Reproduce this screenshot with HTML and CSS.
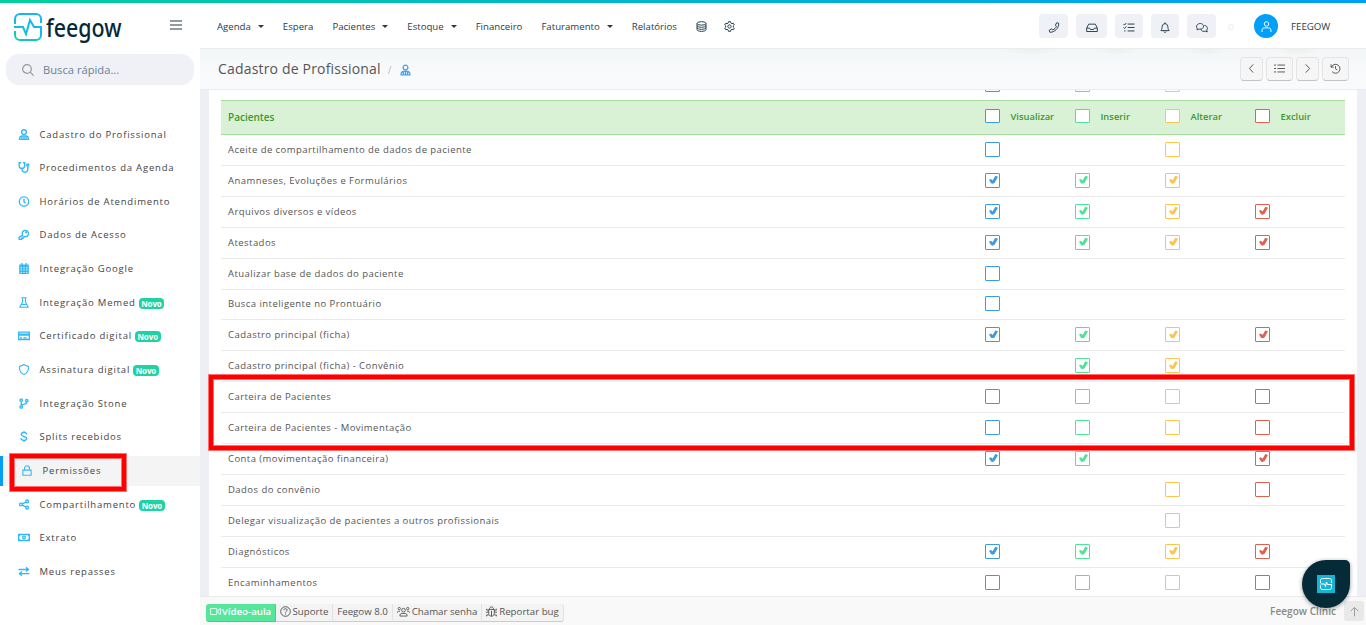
FILE: index.html
```html
<!DOCTYPE html>
<html lang="pt-br">
<head>
    <meta charset="UTF-8">
    <meta name="viewport" content="width=device-width, initial-scale=1.0">
    <title>Feegow - Cadastro de Profissional</title>
    <link rel="stylesheet" href="styles.css">
</head>
<body>

    <header class="navbar">
        <div class="brand">
            <svg class="logo" viewBox="0 0 28 28">
                <defs>
                    <linearGradient id="g" x1="0" y1="1" x2="0.6" y2="0">
                        <stop offset="0" stop-color="#0fd3a0"/>
                        <stop offset="0.6" stop-color="#10bbee"/>
                        <stop offset="1" stop-color="#18b4fa"/>
                    </linearGradient>
                </defs>
                <path stroke="url(#g)" d="M1 11V6a5 5 0 0 1 5-5h16a5 5 0 0 1 5 5v4M1 18v4a5 5 0 0 0 5 5h16a5 5 0 0 0 5-5v-8h-7l-4-7-4 14-3-7H0"/>
            </svg>
            <span class="brand-name">feegow</span>
            <svg class="menu-icon" viewBox="0 0 12 10"><path d="M0 1h12M0 5h12M0 9h12"/></svg>
        </div>
        <nav class="menu">
            <a class="drop">Agenda</a>
            <a>Espera</a>
            <a class="drop">Pacientes</a>
            <a class="drop">Estoque</a>
            <a>Financeiro</a>
            <a class="drop">Faturamento</a>
            <a>Relatórios</a>
            <svg class="ic db" viewBox="0 0 16 16"><ellipse cx="8" cy="3.5" rx="6.5" ry="2.5"/><path d="M1.500 3.500v9c0 3.400 13 3.400 13 0v-9M1.500 6.500c0 3.400 13 3.400 13 0M1.500 9.500c0 3.400 13 3.400 13 0"/></svg>
            <svg class="ic gear" viewBox="0 0 16 16"><path d="M6.500 1h3l.5 2 1.500.9 2-.6 1.500 2.500L13.500 7.200v1.600l1.500 1.400-1.500 2.500-2-.6-1.500.9-.5 2h-3l-.5-2-1.500-.9-2 .6L1 10.200l1.500-1.400V7.200L1 5.800l1.500-2.500 2 .6L6 3z"/><circle cx="8" cy="8" r="2.400"/></svg>
        </nav>
        <div class="tools">
            <button class="tool"><svg class="ic" viewBox="0 0 16 16"><path d="M12 1l3 1c0 7-6 13-13 13l-1-3 3.500-2 1.800 1.500c2.200-1 4.200-3 5.200-5.200L10 4.500z"/></svg></button>
            <button class="tool wide"><svg class="ic" viewBox="0 0 18 16"><path d="M1 9l3-6h10l3 6v5H1zM1 9h4.500l1 2h5l1-2H17"/></svg></button>
            <button class="tool"><svg class="ic" viewBox="0 0 16 16"><path d="M6 3h10M6 8h10M6 13h10M0 3l1.500 1.500L4 1.500M0 8l1.500 1.500L4 6.500M1 13h2"/></svg></button>
            <button class="tool"><svg class="ic" viewBox="0 0 16 16"><path d="M2 12.500c2-2 1.500-4 2-6.500C4.500 3.500 6 2.500 8 2.500s3.500 1 4 3.500c.5 2.500 0 4.500 2 6.500zM8 .5v2M6.300 14c.7 1.500 2.700 1.500 3.400 0"/></svg></button>
            <button class="tool last"><svg class="ic" viewBox="0 0 18 16"><path d="M2 10C-1 6 2 2 6.500 2S13 7 9.500 9.500C7 11 5 10.500 4.500 10.300L1.500 11.500zM12.500 5c4 0 6 4 3.500 7l1 2.500-3-1c-3 1-6 0-6.500-3"/></svg></button>
            <span class="dot"></span>
            <span class="avatar"><svg class="ic" viewBox="0 0 16 16"><circle cx="8" cy="4.300" r="3.300"/><path d="M1.500 16v-2.500c0-3 2-3.500 4-3.500h5c2 0 4 .5 4 3.500V16"/></svg></span>
            <span class="user">FEEGOW</span>
        </div>
    </header>

    <aside class="sidebar">
        <div class="search">
            <svg viewBox="0 0 12 12"><circle cx="5" cy="5" r="4.300"/><path d="M8.200 8.200l3.500 3.500"/></svg>
            <span>Busca rápida...</span>
        </div>
        <ul class="side-menu">
            <li><svg viewBox="0 0 16 16"><circle cx="8" cy="4.500" r="3.500"/><path d="M1.500 15c0-4 2-5 4-5h5c2 0 4 1 4 5zM5 10v5M11 10v5M8 11v4"/></svg>Cadastro do Profissional</li>
            <li><svg viewBox="0 0 16 16"><path d="M4 1H1v4c0 6 8 6 8 0V1H6.500M5 9.500c0 7 8.500 7 8.500 1V6"/><circle cx="13.500" cy="4.500" r="1.600"/></svg>Procedimentos da Agenda</li>
            <li><svg viewBox="0 0 16 16"><circle cx="8" cy="8" r="6.800"/><path d="M8 4v4.500l2.500 2"/></svg>Horários de Atendimento</li>
            <li><svg viewBox="0 0 16 16"><path d="M6 9a4.600 4.600 0 1 1 2.500 2L6.500 12v1.500h-2V15H1v-3z"/><circle cx="11" cy="5" r=".6"/></svg>Dados de Acesso</li>
            <li><svg viewBox="0 0 16 16"><path d="M2 3h12v12H2zM2 5h12M5 0v3M11 0v3M3 8.500h10M3 12h10M6 6v8M10 6v8"/></svg>Integração Google</li>
            <li><svg class="thin" viewBox="0 0 16 16"><path d="M4 1h8M6 1v6L2 15h12L10 7V1M4.500 11h7"/></svg>Integração Memed<b class="badge">Novo</b></li>
            <li><svg viewBox="0 0 18 16"><path d="M1 3h16v11H1zM1 6h16M1 7.500h16M3 11.500h3M8 11.500h5"/></svg>Certificado digital<b class="badge">Novo</b></li>
            <li><svg class="thin" viewBox="0 0 16 16"><path d="M8 1l6.500 2.500C15 9 12 13.500 8 15.200 4 13.500 1 9 1.500 3.500z"/></svg>Assinatura digital<b class="badge">Novo</b></li>
            <li><svg viewBox="0 0 16 16"><circle cx="4" cy="3" r="1.800"/><circle cx="12" cy="4" r="1.800"/><circle cx="4" cy="13" r="1.800"/><path d="M4 5v6M12 6c0 4-6 2-8 5"/></svg>Integração Stone</li>
            <li><svg viewBox="0 0 16 16"><path d="M12 5c-.5-4-8-3.500-8 0s8 2.500 8 6-8 3.500-8.500-.5M8 0v2.500M8 13.500V16"/></svg>Splits recebidos</li>
            <li class="active"><svg class="thin" viewBox="0 0 16 16"><path d="M2 7.500h12V15H2zM4.500 7V4.500C4.500 0 11.500 0 11.500 4.500V7"/></svg>Permissões</li>
            <li><svg viewBox="0 0 16 16"><circle cx="3.500" cy="8" r="2"/><circle cx="12.500" cy="3.500" r="2"/><circle cx="12.500" cy="12.500" r="2"/><path d="M5.500 7l5-2.500M5.500 9l5 2.500"/></svg>Compartilhamento<b class="badge">Novo</b></li>
            <li><svg viewBox="0 0 18 16"><path d="M1 3.500h16v9H1zM1 6l2-2.500M17 6l-2-2.500M1 10l2 2.500M17 10l-2 2.500"/><circle cx="9" cy="8" r="2"/></svg>Extrato</li>
            <li><svg viewBox="0 0 16 16"><path d="M0 5h14M11 2l3.500 3L11 8M16 11H2M5 8l-3.500 3L5 14"/></svg>Meus repasses</li>
        </ul>
    </aside>

    <main class="content">
        <div class="topbar">
            <h1>Cadastro de Profissional</h1>
            <span class="slash">/</span>
            <svg class="doctor" viewBox="0 0 16 16"><circle cx="8" cy="4.500" r="3.500"/><path d="M1.500 15c0-4 2-5 4-5h5c2 0 4 1 4 5zM5 10v5M11 10v5M8 11v4"/></svg>
            <div class="actions">
                <button><svg class="ic" viewBox="0 0 16 16"><path d="M10.500 2L5 8l5.500 6"/></svg></button>
                <button class="big"><svg class="ic" viewBox="0 0 16 16"><path d="M5 3h11M5 8h11M5 13h11M0 3h3M0 8h3M0 13h3"/></svg></button>
                <button><svg class="ic" viewBox="0 0 16 16"><path d="M5.500 2L11 8l-5.500 6"/></svg></button>
                <button class="big"><svg class="ic" viewBox="0 0 16 16"><path d="M1.500 2v4h4M2 6a6.500 6.500 0 1 1 1 6.500M8 4.500v4l2.500 1.500"/></svg></button>
            </div>
        </div>

        <div class="scroll">
            <div class="panel">
                <div class="row"><span></span><i class="blue"></i><i class="green"></i><i class="yellow"></i></div>
                <div class="row head">
                    <span>Pacientes</span>
                    <label><i class="blue"></i>Visualizar</label>
                    <label><i class="green"></i>Inserir</label>
                    <label><i class="yellow"></i>Alterar</label>
                    <label><i class="red"></i>Excluir</label>
                </div>
                <div class="row"><span>Aceite de compartilhamento de dados de paciente</span><i class="blue"></i><i class="yellow"></i></div>
                <div class="row"><span>Anamneses, Evoluções e Formulários</span><i class="blue on"></i><i class="green on"></i><i class="yellow on"></i></div>
                <div class="row"><span>Arquivos diversos e vídeos</span><i class="blue on"></i><i class="green on"></i><i class="yellow on"></i><i class="red on"></i></div>
                <div class="row"><span>Atestados</span><i class="blue on"></i><i class="green on"></i><i class="yellow on"></i><i class="red on"></i></div>
                <div class="row"><span>Atualizar base de dados do paciente</span><i class="blue"></i></div>
                <div class="row"><span>Busca inteligente no Prontuário</span><i class="blue"></i></div>
                <div class="row"><span>Cadastro principal (ficha)</span><i class="blue on"></i><i class="green on"></i><i class="yellow on"></i><i class="red on"></i></div>
                <div class="row"><span>Cadastro principal (ficha) - Convênio</span><i class="green on"></i><i class="yellow on"></i></div>
                <div class="row"><span>Carteira de Pacientes</span><i class="blue"></i><i class="green"></i><i class="yellow"></i><i class="red"></i></div>
                <div class="row"><span>Carteira de Pacientes - Movimentação</span><i class="blue"></i><i class="green"></i><i class="yellow"></i><i class="red"></i></div>
                <div class="row"><span>Conta (movimentação financeira)</span><i class="blue on"></i><i class="green on"></i><i class="red on"></i></div>
                <div class="row"><span>Dados do convênio</span><i class="yellow"></i><i class="red"></i></div>
                <div class="row"><span>Delegar visualização de pacientes a outros profissionais</span><i class="yellow"></i></div>
                <div class="row"><span>Diagnósticos</span><i class="blue on"></i><i class="green on"></i><i class="yellow on"></i><i class="red on"></i></div>
                <div class="row"><span>Encaminhamentos</span><i class="blue"></i><i class="green"></i><i class="yellow"></i><i class="red"></i></div>
            </div>
        </div>

        <footer class="footer">
            <div class="btn-group">
                <button class="video"><svg class="ic" viewBox="0 0 18 16"><path d="M1 3h10v10H1zM13 6l4-3v10l-4-3z"/></svg>Vídeo-aula</button>
                <button class="help"><svg class="ic" viewBox="0 0 16 16"><circle cx="8" cy="8" r="7"/><path d="M5.500 6c0-3 5-2.500 5 0 0 1.500-2.500 1.500-2.500 3.500M8 11v1.500"/></svg>Suporte</button>
                <button class="version">Feegow 8.0</button>
                <button class="call"><svg class="ic" viewBox="0 0 20 16"><circle cx="10" cy="6" r="2.800"/><circle cx="3.500" cy="3.500" r="1.800"/><circle cx="16.500" cy="3.500" r="1.800"/><path d="M4.500 15c0-3 1-4 3-4h5c2 0 3 1 3 4zM0.500 10c0-2 1-2.500 4-2.500M19.500 10c0-2-1-2.500-4-2.500"/></svg>Chamar senha</button>
                <button class="bug"><svg class="ic" viewBox="0 0 16 16"><path d="M4 5h8v6c0 5-8 5-8 0zM5 5c0-5 6-5 6 0M8 7v8M0 9h4M12 9h4M1 4v2h3M15 4v2h-3M1 15v-2h3M15 15v-2h-3"/></svg>Reportar bug</button>
            </div>
            <span class="clinic">Feegow Clinic</span>
            <button class="to-top"><svg class="ic" viewBox="0 0 16 16"><path d="M8 15V2M2.500 7.500L8 2l5.500 5.500"/></svg></button>
        </footer>
    </main>

    <div class="mark mark-menu"></div>
    <div class="mark mark-rows"></div>

    <div class="fab">
        <svg viewBox="0 0 18 18"><path d="M3.500 8V5.500c0-1.500 1-2 2-2h7c1 0 2 .5 2 2V8M3.500 10.500v2c0 1.500 1 2 2 2h7c1 0 2-.5 2-2V9.500h-4L9.500 7 8.500 11.500 7.500 9h-4"/></svg>
    </div>

</body>
</html>
```

FILE: styles.css
```css
* {
    box-sizing: border-box;
}

body {
    margin: 0;
    height: 625px;
    overflow: hidden;
    display: grid;
    grid-template-columns: 200px 1fr;
    grid-template-rows: 48px 577px;
    font-family: "Open Sans", sans-serif;
    font-size: 10px;
    color: #555;
    background: #eeeff5;
}

button {
    font-family: inherit;
    font-size: inherit;
    color: inherit;
    padding: 0;
    border: 0;
    cursor: pointer;
}

svg {
    fill: none;
    stroke: currentColor;
    flex: none;
}

.ic {
    width: 11px;
    height: 11px;
    stroke-width: 1.4;
}

/* barra superior */
.navbar {
    grid-column: 1 / 3;
    display: flex;
    align-items: center;
    background: #fff;
    border-top: 3px solid;
    border-image: linear-gradient(90deg, #00d09c, #00b4cf 50%, #009ff5) 1;
    color: #1f3d4d;
}

.brand {
    width: 217px;
    display: flex;
    align-items: center;
    padding-left: 14px;
}

.logo {
    width: 28px;
    height: 28px;
    stroke-width: 2;
    margin-top: 2px;
}

.brand-name {
    width: 75px;
    margin: 3px 0 0 4px;
    font-family: "Noto Sans", sans-serif;
    font-size: 25.5px;
    font-weight: 500;
    line-height: 36px;
    color: #04293a;
    transform: scaleX(0.84);
    transform-origin: left;
}

.menu-icon {
    width: 12px;
    height: 10px;
    margin: -1px 0 0 49px;
    stroke-width: 1.2;
}

.menu {
    flex: 1;
    display: flex;
    align-items: center;
    gap: 19px;
    padding-top: 1px;
    font-size: 9.65px;
}

.drop::after {
    content: "";
    display: inline-block;
    margin-left: 7px;
    vertical-align: 2px;
    border: 3px solid transparent;
    border-top-color: #1f3d4d;
    border-bottom: 0;
}

.gear {
    margin-left: -2px;
}

.tools {
    display: flex;
    align-items: center;
    width: 328px;
    padding: 1px 0 0 1px;
}

.tool {
    display: flex;
    align-items: center;
    justify-content: center;
    width: 29px;
    height: 24px;
    margin-right: 8px;
    padding-top: 2px;
    border-radius: 4px;
    background: #f0f1f6;
}

.tool .ic {
    width: 12px;
}

.tool.wide {
    width: 31px;
}

.tool + .tool + .tool {
    width: 28px;
}

.tool + .tool.last {
    width: 29px;
}

.dot {
    width: 6px;
    height: 6px;
    margin: 2px 20px 0 4px;
    border: 1px solid #eee;
    border-radius: 50%;
}

.avatar {
    display: flex;
    align-items: center;
    justify-content: center;
    width: 24px;
    height: 24px;
    border-radius: 50%;
    background: #029ff8;
    color: #fff;
}

.user {
    margin-left: 13px;
    font-size: 9.7px;
}

/* menu lateral */
.sidebar {
    background: #fff;
    padding-top: 6px;
}

.search {
    display: flex;
    align-items: center;
    gap: 9px;
    width: 188px;
    height: 31px;
    margin-left: 6px;
    padding-left: 16px;
    border-radius: 13px;
    background: #f0f1f6;
    font-size: 11.2px;
    color: #6d7f99;
}

.search svg {
    width: 12px;
    height: 12px;
    stroke: #999;
    stroke-width: 1.2;
}

.side-menu {
    list-style: none;
    margin: 34px 0 0;
    padding: 0;
    display: grid;
    gap: 3.66px;
}

.side-menu li {
    display: flex;
    align-items: center;
    height: 30px;
    padding-left: 18px;
    font-size: 9.5px;
    letter-spacing: 0.8px;
    color: #444;
}

.side-menu svg {
    width: 12px;
    height: 11px;
    margin-right: 9.5px;
    stroke: #35b8f8;
    stroke-width: 2;
}

.side-menu .thin {
    stroke-width: 1.6;
}

.side-menu .active {
    border-left: 3px solid #029ff8;
    background: #f4f4f4;
}

.badge {
    margin: 2px 0 0 3px;
    height: 11px;
    padding: 0 2.5px;
    border-radius: 4px;
    background: #1ed2a2;
    color: #fff;
    font-size: 8px;
    line-height: 11px;
    letter-spacing: -0.1px;
}

/* conteudo */
.content {
    display: flex;
    flex-direction: column;
    min-width: 0;
}

.topbar {
    flex: none;
    display: flex;
    align-items: center;
    height: 42px;
    padding: 0 17px 0 18px;
    border-top: 1px solid #ececec;
    border-bottom: 1px solid #ececf0;
    background:
        radial-gradient(ellipse 30px 6px at 830px 0, #e6f3ea, transparent),
        radial-gradient(ellipse 24px 6px at 917px 0, #e6f3ea, transparent),
        radial-gradient(ellipse 24px 6px at 1006px 0, #e6f3ea, transparent),
        radial-gradient(ellipse 24px 6px at 1096px 0, #e6f3ea, transparent),
        linear-gradient(#f3f6f6, #f9fafc 70%);
}

.topbar h1 {
    margin: -2px 0 0;
    font-size: 14px;
    font-weight: normal;
    letter-spacing: 0.18px;
    color: #555;
}

.slash {
    margin: 1px 9px 0 7px;
    color: #bbb;
}

.doctor {
    width: 11px;
    height: 12px;
    margin-top: 2px;
    stroke: #4aa3e8;
    stroke-width: 1.9;
}

.actions {
    display: flex;
    gap: 3px;
    margin-left: auto;
}

.actions button {
    display: flex;
    align-items: center;
    justify-content: center;
    width: 23px;
    height: 24px;
    padding-bottom: 2px;
    border: 1px solid #e4e4e4;
    border-bottom: 1px solid #c4c4c4;
    border-radius: 4px;
    background: #f6f6f6;
}

.actions .big {
    width: 27px;
}

.scroll {
    flex: 1;
    overflow: hidden;
    padding: 0 9px;
}

.panel {
    padding: 0 12px;
    margin-top: -21px;
    background: #fff;
}

.row {
    display: grid;
    grid-template-columns: 764px 90px 90px 90px 90px;
    align-items: center;
    height: 30.92px;
    padding-bottom: 1px;
    border-bottom: 1px solid #ebebeb;
    font-size: 9.5px;
    letter-spacing: 0.45px;
}

.row:first-child {
    height: 31px;
    border: 0;
}

.row span {
    padding-left: 7px;
}

.head {
    height: 35px;
    border-top: 1px solid #a5dd9f;
    border-bottom: 1px solid #a5dd9f;
    background: #d9f2d6;
    color: #40962f;
    font-size: 10px;
    font-weight: 600;
    letter-spacing: 0;
}

.head label {
    display: flex;
    align-items: center;
    gap: 10.5px;
    margin-top: -2px;
    font-size: 9.4px;
}

/* caixas de permissao */
.row i {
    width: 15px;
    height: 15px;
    border: 1px solid;
    border-radius: 1px;
    background: #fff;
}

.head i {
    height: 14px;
}

.row i.on::after {
    content: "";
    display: block;
    width: 9px;
    height: 8px;
    margin: 2px 0 0 3px;
    background: currentColor;
    clip-path: polygon(0 50%, 22% 40%, 40% 58%, 70% 0, 100% 12%, 62% 88%, 40% 100%, 22% 92%);
}

.blue {
    grid-column: 2;
    color: #3d9be0;
}

.green {
    grid-column: 3;
    color: #4ee397;
}

.yellow {
    grid-column: 4;
    color: #fdc54d;
}

.red {
    grid-column: 5;
    color: #e2604f;
}

/* rodape */
.footer {
    flex: none;
    display: flex;
    align-items: center;
    height: 29px;
    padding: 0 2px 0 6px;
    border-top: 1px solid #eaeaea;
    background: #f9f9f9;
}

.btn-group {
    display: flex;
    margin-top: 3px;
}

.btn-group button {
    display: flex;
    align-items: center;
    justify-content: center;
    gap: 1px;
    height: 18px;
    padding-bottom: 2px;
    border-right: 1px solid #e2e2e2;
    border-bottom: 1px solid #ccc;
    background: #f3f3f3;
    font-size: 9.7px;
    white-space: nowrap;
}

.btn-group .video {
    width: 70px;
    border-color: #45cf87;
    border-radius: 3px 0 0 3px;
    background: #54e79b;
    color: #fff;
    font-weight: 600;
}

.btn-group .help {
    width: 57px;
    gap: 2px;
}

.btn-group .version {
    width: 60px;
}

.btn-group .call {
    width: 89px;
    gap: 2px;
}

.btn-group .call .ic {
    width: 13px;
}

.btn-group .bug {
    width: 82px;
    gap: 2px;
    border-radius: 0 3px 3px 0;
}

.clinic {
    margin-left: auto;
    font-weight: 600;
    letter-spacing: 0.05px;
    color: #888;
}

.to-top {
    display: flex;
    align-items: center;
    justify-content: center;
    width: 20px;
    height: 20px;
    margin-left: 8px;
    border-radius: 3px;
    background: #e9e9e9;
    color: #999;
}

/* destaques em vermelho */
.mark {
    position: absolute;
    border: 4px solid #f00;
    box-shadow: 0 0 0 1px #ff7070, inset 0 0 0 1px #ff7070;
}

.mark-menu {
    left: 10px;
    top: 454px;
    width: 116px;
    height: 37px;
}

.mark-rows {
    left: 209px;
    top: 375px;
    width: 1145px;
    height: 75px;
}

.fab {
    position: absolute;
    left: 1302px;
    top: 560px;
    display: flex;
    align-items: center;
    justify-content: center;
    width: 48px;
    height: 48px;
    border-radius: 50% 5px 50% 50%;
    background: #052b39;
    box-shadow: 0 1px 4px rgba(0, 0, 0, 0.4);
}

.fab svg {
    width: 18px;
    height: 18px;
    background: #17b5d4;
    stroke: #fff;
}
```
